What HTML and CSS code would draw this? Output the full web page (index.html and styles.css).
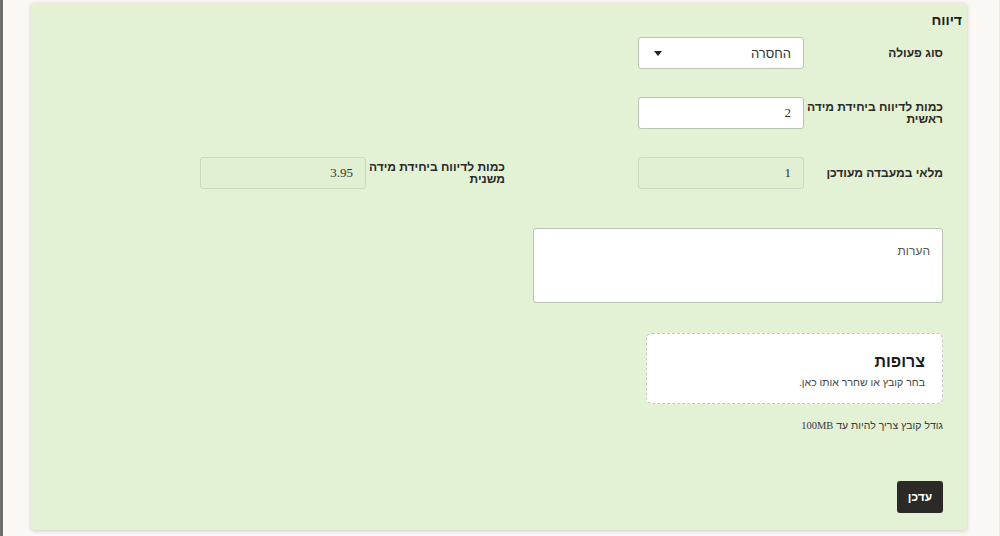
FILE: index.html
```html
<!DOCTYPE html>
<html lang="he" dir="rtl">
<head>
<meta charset="utf-8">
<title>דיווח</title>
<link rel="stylesheet" href="styles.css">
</head>
<body>
<div class="frame">
  <section class="card">
    <h2 class="card-title">דיווח</h2>

    <div class="fields">
      <div class="field">
        <label class="field-label">סוג פעולה</label>
        <div class="control select">
          <span class="value">החסרה</span>
          <svg class="caret" width="8" height="5" viewBox="0 0 8 5"><path d="M0 0H8L4 5Z" fill="#222"/></svg>
        </div>
      </div>
      <div class="field empty"></div>

      <div class="field">
        <label class="field-label">כמות לדיווח ביחידת מידה ראשית</label>
        <div class="control"><span class="value num">2</span></div>
      </div>
      <div class="field empty"></div>

      <div class="field">
        <label class="field-label">מלאי במעבדה מעודכן</label>
        <div class="control disabled"><span class="value num">1</span></div>
      </div>
      <div class="field">
        <label class="field-label">כמות לדיווח ביחידת מידה משנית</label>
        <div class="control disabled"><span class="value num">3.95</span></div>
      </div>
    </div>

    <div class="notes">
      <span class="placeholder">הערות</span>
    </div>

    <div class="dropzone">
      <div class="dz-title">צרופות</div>
      <div class="dz-hint">בחר קובץ או שחרר אותו כאן.</div>
    </div>
    <p class="size-note">גודל קובץ צריך להיות עד <span class="num">100MB</span></p>

    <div class="actions">
      <button class="btn">עדכן</button>
    </div>
  </section>
</div>
</body>
</html>
```

FILE: styles.css
```css
html, body {
  margin: 0;
  height: 100%;
}

body {
  background: #faf7f4;
  font-family: "Liberation Sans", Arial, sans-serif;
  color: #2a2a2a;
}

.frame {
  height: 536px;
  box-sizing: border-box;
  border-left: 3px solid #6e6e6e;
  border-right: 1px solid #ece8e4;
  padding: 3px 32px 0 28px;
}

.card {
  background: #e3f1d5;
  border-radius: 4px;
  box-shadow: 0 1px 4px rgba(0, 0, 0, 0.18);
  height: 527px;
  box-sizing: border-box;
  padding: 10px 24px 17px 24px;
  display: flex;
  flex-direction: column;
  align-items: flex-start;
}

.card-title {
  margin: 0 -19px 0 0;
  font-size: 14px;
  font-weight: bold;
  line-height: 14px;
  color: #1c1c1c;
}

.fields {
  margin-top: 10px;
  display: grid;
  grid-template-columns: 305px 305px;
  column-gap: 133px;
  row-gap: 28px;
}

.field {
  display: flex;
  align-items: center;
  height: 32px;
}

.field-label {
  width: 139px;
  flex: none;
  box-sizing: border-box;
  padding-left: 0;
  font-size: 12px;
  font-weight: bold;
  line-height: 12px;
  color: #2a2a2a;
}

.control {
  width: 166px;
  height: 32px;
  box-sizing: border-box;
  background: #fff;
  border: 1px solid #b9c2b3;
  border-radius: 3px;
  display: flex;
  align-items: center;
  justify-content: space-between;
  padding: 0 12px 0 15px;
  font-size: 13px;
  color: #333;
}

.control.disabled {
  background: #e1efd3;
  border-color: #cad8bf;
}

.num {
  font-family: "Liberation Serif", "Times New Roman", serif;
}

.caret {
  display: block;
}

.notes {
  margin-top: 39px;
  width: 410px;
  height: 75px;
  box-sizing: border-box;
  background: #fff;
  border: 1px solid #b9c2b3;
  border-radius: 3px;
  padding: 12px 12px;
}

.placeholder {
  font-size: 12px;
  color: #555;
}

.dropzone {
  margin-top: 30px;
  width: 297px;
  height: 71px;
  box-sizing: border-box;
  background: #fff;
  border: 1px dashed #c3c9bf;
  border-radius: 6px;
  padding: 18px 17px 0;
}

.dz-title {
  font-size: 16px;
  font-weight: bold;
  line-height: 20px;
  color: #1c1c1c;
}

.dz-hint {
  margin-top: 3px;
  font-size: 10.5px;
  line-height: 14px;
  color: #444;
}

.size-note {
  margin: 14px 0 0;
  font-size: 10.5px;
  line-height: 14px;
  color: #3a3a3a;
}

.actions {
  margin-top: auto;
}

.btn {
  width: 46px;
  height: 32px;
  border: none;
  border-radius: 3px;
  background: #2b2a26;
  color: #fff;
  font-family: "Liberation Sans", Arial, sans-serif;
  font-size: 12px;
  font-weight: bold;
  padding: 0;
}
```
